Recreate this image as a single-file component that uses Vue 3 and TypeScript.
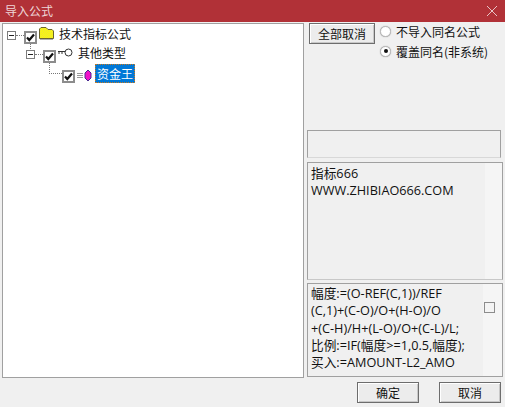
<script setup lang="ts">
const formula: string[] = [
  '幅度:=(O-REF(C,1))/REF',
  '(C,1)+(C-O)/O+(H-O)/O',
  '+(C-H)/H+(L-O)/O+(C-L)/L;',
  '比例:=IF(幅度>=1,0.5,幅度);',
  '买入:=AMOUNT-L2_AMO',
]
</script>

<template>
  <div class="win">
    <header class="title">
      <span>导入公式</span>
      <svg class="close" width="10" height="10" viewBox="0 0 10 10"><path d="M0 0L10 10M10 0L0 10" stroke="#e8c4c6" stroke-width="1" fill="none" /></svg>
    </header>
    <div class="body">
      <div class="main">
        <section class="tree">
          <div class="row r1">
            <span class="expander"><i></i></span>
            <span class="dots-h"></span>
            <span class="check"><svg width="9" height="9" viewBox="0 0 9 9"><path d="M1 4.5L3.3 7L8 1.5" stroke="#111" stroke-width="2.2" fill="none" /></svg></span>
            <svg class="folder" width="15" height="13" viewBox="0 0 15 13">
              <defs>
                <pattern id="dither" width="2" height="2" patternUnits="userSpaceOnUse">
                  <rect width="2" height="2" fill="#ffff00" />
                  <rect width="1" height="1" fill="#e8e040" />
                  <rect x="1" y="1" width="1" height="1" fill="#e8e040" />
                </pattern>
              </defs>
              <path d="M0.5 11.5V2L2 0.5H7L9 2.5H13L14.5 4V11.5Z" fill="url(#dither)" stroke="#6a6430" />
              <path d="M1 12.5H14" stroke="#b0b0b0" />
            </svg>
            <span class="lbl l1">技术指标公式</span>
          </div>
          <div class="row r2">
            <span class="expander"><i></i></span>
            <span class="dots-h"></span>
            <span class="check"><svg width="9" height="9" viewBox="0 0 9 9"><path d="M1 4.5L3.3 7L8 1.5" stroke="#111" stroke-width="2.2" fill="none" /></svg></span>
            <svg class="key" width="15" height="9" viewBox="0 0 15 9"><circle cx="10.5" cy="4.5" r="3.5" fill="#fff" stroke="#333" /><path d="M0 3.5H7M1 3.5V6M4 3.5V6" stroke="#333" fill="none" /></svg>
            <span class="lbl l2">其他类型</span>
          </div>
          <div class="row r3">
            <span class="elbow"></span>
            <span class="check"><svg width="9" height="9" viewBox="0 0 9 9"><path d="M1 4.5L3.3 7L8 1.5" stroke="#111" stroke-width="2.2" fill="none" /></svg></span>
            <svg class="gem" width="16" height="13" viewBox="0 0 16 13"><path d="M1 4.5H7M1 6.5H7M1 8.5H7" stroke="#999" fill="none" /><path d="M12 1L15 4V9L12 12L9 9V4Z" fill="#f012c8" stroke="#4a2a90" /></svg>
            <span class="lbl sel">资金王</span>
          </div>
        </section>
        <aside class="side">
          <div class="opts">
            <button class="btn all">全部取消</button>
            <div class="radios">
              <label class="radio"><span class="dot"></span>不导入同名公式</label>
              <label class="radio"><span class="dot on"></span>覆盖同名(非系统)</label>
            </div>
          </div>
          <div class="blank"></div>
          <div class="info"><div class="inner">指标666<br />WWW.ZHIBIAO666.COM</div></div>
          <div class="code">
            <div class="lines"><div v-for="l in formula" :key="l">{{ l }}</div></div>
            <span class="mini"></span>
          </div>
        </aside>
      </div>
      <footer class="foot">
        <button class="btn act">确定</button>
        <button class="btn act">取消</button>
      </footer>
    </div>
  </div>
</template>

<style>
html, body { margin: 0; background: #f0f0f0; }
</style>

<style scoped>
.win {
  width: 505px;
  height: 407px;
  display: flex;
  flex-direction: column;
  box-sizing: border-box;
  background: #f0f0f0;
  font-family: "Noto Sans CJK SC", "Liberation Sans", sans-serif;
  font-size: 12px;
  color: #111;
  overflow: hidden;
}
.title {
  height: 22px;
  flex: none;
  background: #b13137;
  color: #eed6d7;
  font-size: 12px;
  line-height: 20px;
  padding: 0 9px 0 5px;
  display: flex;
  align-items: center;
  justify-content: space-between;
}
.close { margin-right: -1px; }
.body { flex: 1; display: flex; flex-direction: column; padding: 1px 2px 0 2px; min-height: 0; }
.main { display: flex; height: 355px; gap: 2px; }
.tree {
  width: 302px;
  box-sizing: border-box;
  background: #fff;
  border: 1px solid #a0a0a0;
  padding: 2px 0 0 4px;
}
.row { display: flex; align-items: flex-start; position: relative; }
.r1 { height: 19px; }
.r2 { height: 20px; margin-left: 19px; }
.r3 { margin-left: 42px; }
.expander {
  width: 9px;
  height: 9px;
  margin-top: 5px;
  box-sizing: border-box;
  border: 1px solid #7c7c7c;
  background: #fff;
  display: inline-flex;
  align-items: center;
  justify-content: center;
  flex: none;
}
.expander i { display: block; width: 5px; height: 1px; background: #222; }
.dots-h { width: 8px; margin-top: 9px; border-top: 1px dotted #777; flex: none; }
.check {
  width: 13px;
  height: 13px;
  margin-top: 5px;
  box-sizing: border-box;
  border: 2px solid #8c8c8c;
  background: #fff;
  flex: none;
  display: flex;
}
.r1::after {
  content: "";
  position: absolute;
  left: 23px;
  top: 18px;
  height: 7px;
  border-left: 1px dotted #777;
}
.folder { margin: 1px 0 0 2px; flex: none; }
.key { margin: 3px 0 0 2px; flex: none; }
.lbl { white-space: nowrap; line-height: 15px; }
.l1 { margin-left: 5px; }
.l2 { margin-left: 5px; }
.elbow {
  width: 13px;
  height: 11px;
  margin-top: -2px;
  box-sizing: border-box;
  border-left: 1px dotted #777;
  border-bottom: 1px dotted #777;
  flex: none;
}
.gem { flex: none; margin: 4px 0 0 1px; }
.sel {
  margin: -1px 0 0 3px;
  background: #0078d7;
  color: #fff;
  outline: 1px dotted #c87a20;
  outline-offset: -1px;
  padding: 0 2px;
  width: 36px;
  line-height: 19px;
}
.side { flex: 1; display: flex; flex-direction: column; min-width: 0; }
.opts { display: flex; height: 107px; align-items: flex-start; box-sizing: border-box; }
.btn {
  font-family: inherit;
  font-size: 12px;
  color: #111;
  background: #ececec;
  border: 1px solid #6d6d6d;
  box-shadow: inset 1px 1px 0 #fff, inset -1px -1px 0 #c8c8c8;
  padding: 0;
  box-sizing: border-box;
}
.all { width: 66px; height: 21px; margin-left: 3px; }
.radios { margin-left: 5px; display: flex; flex-direction: column; gap: 4px; }
.radio { display: flex; align-items: center; height: 16px; white-space: nowrap; }
.dot {
  width: 11px;
  height: 11px;
  border: 1px solid #b8b8b8;
  border-radius: 50%;
  background: #fff;
  margin-right: 5px;
  box-sizing: border-box;
  position: relative;
  box-shadow: 0 0 1px #999;
}
.dot.on::after {
  content: "";
  position: absolute;
  left: 2.5px;
  top: 2.5px;
  width: 4px;
  height: 4px;
  border-radius: 50%;
  background: #111;
}
.blank { height: 28px; margin-left: 1px; box-sizing: border-box; border: 1px solid #a0a0a0; border-bottom-color: #d8d8d8; background: #f0f0f0; margin-right: 2px; }
.info {
  height: 118px;
  box-sizing: border-box;
  margin-top: 4px;
  margin-left: 1px;
  border: 1px solid #a0a0a0;
  border-bottom-color: #c8c8c8;
  background: #f5f5f5;
}
.inner {
  width: 177px;
  height: 100%;
  background: #f0f0f0;
  padding: 2px 3px;
  box-sizing: border-box;
  line-height: 17px;
  font-size: 12.7px;
  font-family: "Open Sans", "Noto Sans CJK SC", sans-serif;
}
.code {
  margin-top: 3px;
  margin-left: 1px;
  height: 94px;
  box-sizing: border-box;
  border: 1px solid #a0a0a0;
  padding: 1px 3px;
  line-height: 17.25px;
  font-size: 12.7px;
  position: relative;
  white-space: nowrap;
  background: linear-gradient(to right, #f0f0f0 175px, #f5f5f5 175px);
  font-family: "Open Sans", "Noto Sans CJK SC", sans-serif;
}
.mini {
  position: absolute;
  right: 7px;
  top: 18px;
  width: 11px;
  height: 11px;
  box-sizing: border-box;
  border: 1px solid #8c8c8c;
  background: #f4f4f4;
}
.foot { display: flex; justify-content: flex-end; gap: 20px; padding-top: 4px; padding-right: 2px; }
.act { width: 62px; height: 21px; }
</style>
